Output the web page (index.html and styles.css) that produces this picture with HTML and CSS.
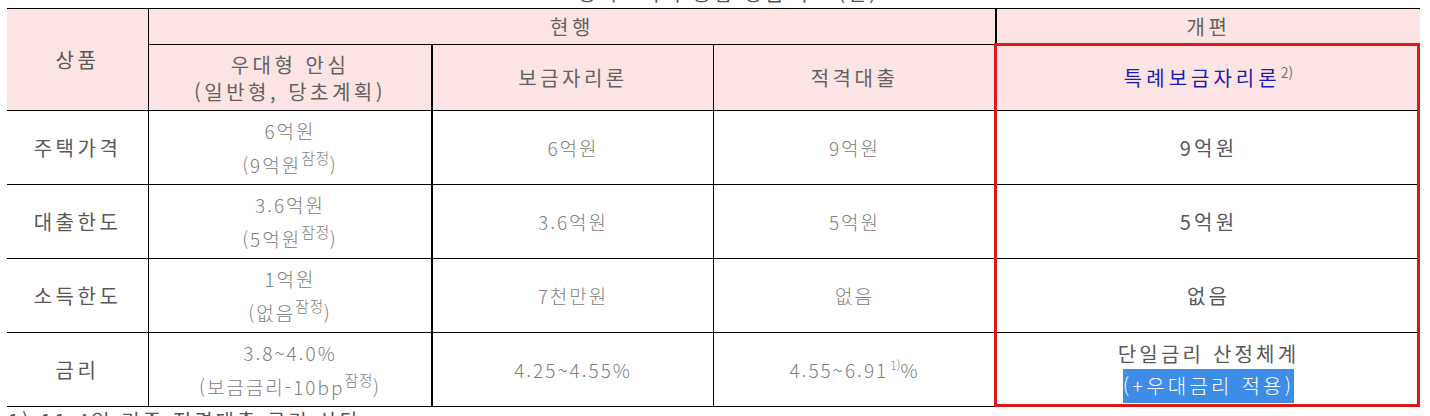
FILE: index.html
```html
<!DOCTYPE html>
<html lang="ko">
<head>
<meta charset="utf-8">
<title>정책모기지 비교</title>
<link rel="stylesheet" href="styles.css">
</head>
<body>
<div class="page">
  <div class="title">정책모기지 통합 상품 구조(안)</div>
  <div class="wrap">
    <div class="grid">
      <div class="c hd c1 rspan"><div class="t">상품</div></div>
      <div class="c hd l1 cspan"><div class="t">현행</div></div>
      <div class="c hd l2"><div class="t">개편</div></div>

      <div class="c hd l1"><div class="t">우대형 안심<br>(일반형, 당초계획)</div></div>
      <div class="c hd l2"><div class="t">보금자리론</div></div>
      <div class="c hd l1"><div class="t">적격대출</div></div>
      <div class="c hd l2 blue"><div class="t">특례보금자리론<sup class="sp">2)</sup></div></div>

      <div class="c c1"><div class="t">주택가격</div></div>
      <div class="c l1 thin"><div class="t">6억원<br>(9억원<sup class="sj">잠정</sup>)</div></div>
      <div class="c l2 thin"><div class="t">6억원</div></div>
      <div class="c l1 thin"><div class="t">9억원</div></div>
      <div class="c l2 new"><div class="t">9억원</div></div>

      <div class="c c1"><div class="t">대출한도</div></div>
      <div class="c l1 thin"><div class="t">3.6억원<br>(5억원<sup class="sj">잠정</sup>)</div></div>
      <div class="c l2 thin"><div class="t">3.6억원</div></div>
      <div class="c l1 thin"><div class="t">5억원</div></div>
      <div class="c l2 new"><div class="t">5억원</div></div>

      <div class="c c1"><div class="t">소득한도</div></div>
      <div class="c l1 thin"><div class="t">1억원<br>(없음<sup class="sj">잠정</sup>)</div></div>
      <div class="c l2 thin"><div class="t">7천만원</div></div>
      <div class="c l1 thin"><div class="t">없음</div></div>
      <div class="c l2 new"><div class="t">없음</div></div>

      <div class="c c1"><div class="t">금리</div></div>
      <div class="c l1 thin"><div class="t">3.8~4.0%<br>(보금금리-10bp<sup class="sj">잠정</sup>)</div></div>
      <div class="c l2 thin"><div class="t">4.25~4.55%</div></div>
      <div class="c l1 thin"><div class="t">4.55~6.91<sup class="s1">1)</sup>%</div></div>
      <div class="c l2 new"><div class="t">단일금리 산정체계<br><span class="hl">(+우대금리 적용)</span></div></div>
    </div>
    <div class="redbox"></div>
  </div>
  <div class="note">1) 11.4일 기준 적격대출 금리 상단</div>
</div>
</body>
</html>
```

FILE: styles.css
```css
html, body {
  margin: 0;
  padding: 0;
  background: #fff;
}
body {
  font-family: "Noto Sans CJK KR", "Noto Sans", sans-serif;
  color: #5a5a5a;
  overflow: hidden;
}
.page {
  width: 1430px;
  height: 416px;
  overflow: hidden;
}
.title {
  height: 30px;
  margin-top: -22px;
  line-height: 30px;
  font-size: 20px;
  letter-spacing: 3px;
  text-align: center;
  padding-left: 26px;
  color: #555;
}
.wrap {
  position: relative;
  margin-left: 7px;
  width: 1413px;
}
.grid {
  display: grid;
  grid-template-columns: 141px 283px 282px 282px 425px;
  grid-template-rows: 36px 66px 74px 74px 74px 74px;
  border-top: 1px solid #000;
}
.c {
  box-sizing: border-box;
  border-bottom: 1px solid #000;
  display: flex;
  align-items: center;
  justify-content: center;
  text-align: center;
  background: #fff;
}
.t {
  text-align: center;
}
.l1 { border-left: 1px solid #000; }
.l2 { border-left: 2px solid #000; }
.hd {
  background: #fde4e4;
  font-size: 20px;
  letter-spacing: 3.5px;
  color: #626262;
  line-height: 27px;
}
.rspan { grid-row: span 2; }
.cspan { grid-column: span 3; }
.c1 {
  font-size: 20px;
  letter-spacing: 3.5px;
  color: #585858;
}
.thin {
  font-size: 19px;
  letter-spacing: 2px;
  color: #808080;
  font-weight: 300;
  line-height: 34px;
}
.new {
  font-size: 20px;
  letter-spacing: 3.2px;
  color: #585858;
  line-height: 32px;
}
.hd.blue {
  color: #1c1cb0;
  font-size: 20px;
  letter-spacing: 4px;
}
sup {
  line-height: 0;
  vertical-align: 0;
  position: relative;
}
.sp {
  font-size: 14px;
  color: #777;
  letter-spacing: 0;
  top: -8px;
  margin-left: 0;
}
.sj {
  font-size: 15px;
  top: -9px;
  letter-spacing: 0.5px;
}
.s1 {
  font-size: 12px;
  top: -8px;
  letter-spacing: 0;
  margin-left: 2px;
}
.hl {
  background: #3d8de8;
  color: #fff;
  padding: 2px 0 3px;
  font-weight: 300;
}
.redbox {
  position: absolute;
  left: 987px;
  top: 35px;
  width: 426px;
  height: 364px;
  border: 3px solid #dd1a1a;
  box-sizing: border-box;
  pointer-events: none;
}
.note {
  padding-left: 8px;
  font-size: 20px;
  line-height: 24px;
  letter-spacing: 3px;
  color: #555;
  margin-top: 2px;
}
```
